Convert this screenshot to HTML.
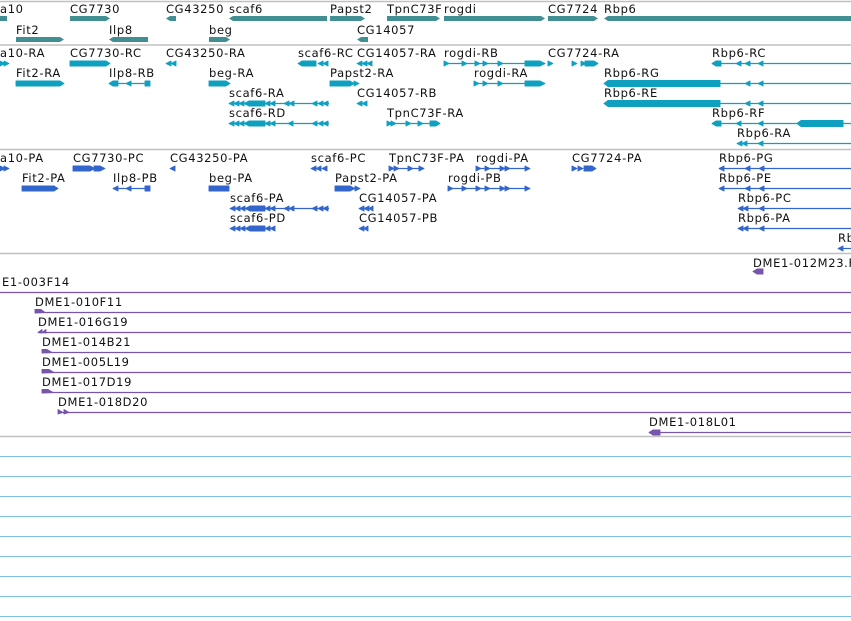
<!DOCTYPE html>
<html><head><meta charset="utf-8"><style>
html,body{margin:0;padding:0;background:#fff;width:851px;height:621px;overflow:hidden}
svg{display:block}
text{font-family:"DejaVu Sans","Liberation Sans",sans-serif;font-size:11.5px;fill:#111;letter-spacing:0.65px}
</style></head><body>
<svg width="851" height="621" viewBox="0 0 851 621" xmlns="http://www.w3.org/2000/svg">
<g stroke="#c0c0c0" stroke-width="1.5">
<line x1="0" y1="1.5" x2="851" y2="1.5"/><line x1="0" y1="45" x2="851" y2="45"/><line x1="0" y1="149.5" x2="851" y2="149.5"/><line x1="0" y1="253.5" x2="851" y2="253.5"/><line x1="0" y1="436.5" x2="851" y2="436.5"/>
</g>
<g stroke="#80bfe6" stroke-width="1">
<line x1="0" y1="456.5" x2="851" y2="456.5"/><line x1="0" y1="476.5" x2="851" y2="476.5"/><line x1="0" y1="496.5" x2="851" y2="496.5"/><line x1="0" y1="516.5" x2="851" y2="516.5"/><line x1="0" y1="536.5" x2="851" y2="536.5"/><line x1="0" y1="556.5" x2="851" y2="556.5"/><line x1="0" y1="576.5" x2="851" y2="576.5"/><line x1="0" y1="596.5" x2="851" y2="596.5"/><line x1="0" y1="616.5" x2="851" y2="616.5"/>
</g>

<!-- Track 1 genes -->
<g fill="#418e93">
<rect x="0" y="16" width="7" height="5"/>
<polygon points="70,16 106,16 110,18.5 106,21 70,21"/>
<polygon points="166,18.5 170,16 176,16 176,21 170,21"/>
<polygon points="229,18.5 233,16 327,16 327,21 233,21"/>
<polygon points="330,16 361,16 365,18.5 361,21 330,21"/>
<polygon points="387,16 436,16 440,18.5 436,21 387,21"/>
<polygon points="444,16 541,16 545,18.5 541,21 444,21"/>
<polygon points="548,16 594,16 598,18.5 594,21 548,21"/>
<polygon points="604,18.5 608,16 851,16 851,21 608,21"/>
<polygon points="16,37 60,37 64,39.5 60,42 16,42"/>
<polygon points="109,39.5 113,37 148,37 148,42 113,42"/>
<polygon points="209,37 226,37 230,39.5 226,42 209,42"/>
<polygon points="357,39.5 361,37 368,37 368,42 361,42"/>
</g>
<text x="0" y="13">a10</text><text x="70" y="13">CG7730</text><text x="166" y="13">CG43250</text><text x="229" y="13">scaf6</text><text x="330" y="13">Papst2</text><text x="387" y="13">TpnC73F</text><text x="444" y="13">rogdi</text><text x="548" y="13">CG7724</text><text x="604" y="13">Rbp6</text>
<text x="16" y="34">Fit2</text><text x="109" y="34">Ilp8</text><text x="209" y="34">beg</text><text x="357" y="34">CG14057</text>

<!-- Track 2 transcripts -->
<g stroke="#0fa0c0" stroke-width="1.2">
<line x1="109" y1="83.5" x2="150" y2="83.5"/>
<line x1="444" y1="63.5" x2="545" y2="63.5"/><line x1="474" y1="83.5" x2="545" y2="83.5"/>
<line x1="712" y1="63.5" x2="851" y2="63.5"/><line x1="720" y1="83.5" x2="851" y2="83.5"/><line x1="720" y1="103.5" x2="851" y2="103.5"/><line x1="712" y1="123.5" x2="851" y2="123.5"/><line x1="737" y1="143.5" x2="851" y2="143.5"/>
<line x1="229" y1="103.5" x2="329" y2="103.5"/><line x1="229" y1="123.5" x2="329" y2="123.5"/><line x1="387" y1="123.5" x2="440" y2="123.5"/>
</g>
<g fill="#0fa0c0" stroke="#0fa0c0" stroke-width="0.9" stroke-linejoin="round">
<polygon points="0,61 5,63.5 0,66"/><polygon points="4,61 9,63.5 4,66"/>
<polygon points="70,61 106,61 110,63.5 106,66 70,66"/>
<polygon points="166,63.5 171,61 171,66"/><polygon points="171,63.5 176,61 176,66"/>
<polygon points="298,63.5 302,61 316,61 316,66 302,66"/><polygon points="318,63.5 323,61 323,66"/><polygon points="323,63.5 328,61 328,66"/>
<polygon points="357,63.5 362,61 362,66"/><polygon points="362,63.5 367,61 367,66"/><polygon points="367,63.5 372,61 372,66"/>
<polygon points="444,61 449,63.5 444,66"/><polygon points="462,61 467,63.5 462,66"/><polygon points="475,61 480,63.5 475,66"/><polygon points="483,61 488,63.5 483,66"/><polygon points="498,61 503,63.5 498,66"/>
<polygon points="525,61 540,61 545,63.5 540,66 525,66"/>
<polygon points="548,61 553,63.5 548,66"/><polygon points="572,61 577,63.5 572,66"/><polygon points="581,61 586,63.5 581,66"/><polygon points="585,61 594,61 598,63.5 594,66 585,66"/>
<polygon points="712,63.5 716,61 721,61 721,66 716,66"/><polygon points="736,63.5 741,61 741,66"/><polygon points="745,63.5 750,61 750,66"/><polygon points="758,63.5 763,61 763,66"/>
<polygon points="16,81 60,81 64,83.5 60,86 16,86"/>
<polygon points="109,83.5 113,81 118,81 118,86 113,86"/><polygon points="126,83.5 131,81 131,86"/><polygon points="145,81 150,81 150,86 145,86"/>
<polygon points="209,81 226,81 230,83.5 226,86 209,86"/>
<polygon points="330,81 350,81 354,83.5 350,86 330,86"/><polygon points="354,81 359,83.5 354,86"/>
<polygon points="474,81 479,83.5 474,86"/><polygon points="483,81 488,83.5 483,86"/><polygon points="498,81 503,83.5 498,86"/><polygon points="525,81 540,81 545,83.5 540,86 525,86"/>
<polygon points="604,83.5 608,80.5 720,80.5 720,86.5 608,86.5"/><polygon points="745,83.5 750,81 750,86"/><polygon points="758,83.5 763,81 763,86"/>
<polygon points="229,103.5 234,101 234,106"/><polygon points="234,103.5 239,101 239,106"/><polygon points="239,103.5 244,101 244,106"/><polygon points="244,103.5 249,101 249,106"/><polygon points="249,101 265,101 265,106 249,106"/><polygon points="265,103.5 270,101 270,106"/><polygon points="270,103.5 275,101 275,106"/><polygon points="284,103.5 289,101 289,106"/><polygon points="289,103.5 294,101 294,106"/><polygon points="312,103.5 317,101 317,106"/><polygon points="318,103.5 323,101 323,106"/><polygon points="323,103.5 328,101 328,106"/>
<polygon points="357,103.5 362,101 362,106"/><polygon points="362,103.5 367,101 367,106"/>
<polygon points="604,103.5 608,100.5 720,100.5 720,106.5 608,106.5"/><polygon points="745,103.5 750,101 750,106"/><polygon points="758,103.5 763,101 763,106"/>
<polygon points="229,123.5 234,121 234,126"/><polygon points="234,123.5 239,121 239,126"/><polygon points="239,123.5 244,121 244,126"/><polygon points="244,123.5 249,121 249,126"/><polygon points="249,121 265,121 265,126 249,126"/><polygon points="265,123.5 270,121 270,126"/><polygon points="270,123.5 275,121 275,126"/><polygon points="288,123.5 293,121 293,126"/><polygon points="312,123.5 317,121 317,126"/><polygon points="318,123.5 323,121 323,126"/><polygon points="323,123.5 328,121 328,126"/>
<polygon points="387,121 392,123.5 387,126"/><polygon points="391,121 396,123.5 391,126"/><polygon points="406,121 411,123.5 406,126"/><polygon points="418,121 423,123.5 418,126"/><polygon points="430,121 436,121 440,123.5 436,126 430,126"/>
<polygon points="712,123.5 716,121 721,121 721,126 716,126"/><polygon points="736,123.5 741,121 741,126"/><polygon points="758,123.5 763,121 763,126"/><polygon points="797,123.5 801,120.5 843,120.5 843,126.5 801,126.5"/>
<polygon points="737,143.5 742,141 742,146"/><polygon points="742,143.5 747,141 747,146"/><polygon points="758,143.5 763,141 763,146"/>
</g>
<text x="0" y="57">a10-RA</text><text x="70" y="57">CG7730-RC</text><text x="166" y="57">CG43250-RA</text><text x="298" y="57">scaf6-RC</text><text x="357" y="57">CG14057-RA</text><text x="444" y="57">rogdi-RB</text><text x="548" y="57">CG7724-RA</text><text x="712" y="57">Rbp6-RC</text>
<text x="16" y="77">Fit2-RA</text><text x="109" y="77">Ilp8-RB</text><text x="209" y="77">beg-RA</text><text x="330" y="77">Papst2-RA</text><text x="474" y="77">rogdi-RA</text><text x="604" y="77">Rbp6-RG</text>
<text x="229" y="97">scaf6-RA</text><text x="357" y="97">CG14057-RB</text><text x="604" y="97">Rbp6-RE</text>
<text x="229" y="117">scaf6-RD</text><text x="387" y="117">TpnC73F-RA</text><text x="712" y="117">Rbp6-RF</text>
<text x="737" y="137">Rbp6-RA</text>

<!-- Track 3 proteins -->
<g stroke="#3366cc" stroke-width="1.2">
<line x1="113" y1="188.5" x2="150" y2="188.5"/><line x1="389" y1="168.5" x2="424" y2="168.5"/><line x1="476" y1="168.5" x2="530" y2="168.5"/><line x1="448" y1="188.5" x2="530" y2="188.5"/>
<line x1="230" y1="208.5" x2="329" y2="208.5"/>
<line x1="719" y1="168.5" x2="851" y2="168.5"/><line x1="719" y1="188.5" x2="851" y2="188.5"/><line x1="738" y1="208.5" x2="851" y2="208.5"/><line x1="738" y1="228.5" x2="851" y2="228.5"/><line x1="838" y1="248.5" x2="851" y2="248.5"/>
</g>
<g fill="#3366cc" stroke="#3366cc" stroke-width="0.9" stroke-linejoin="round">
<polygon points="0,166 5,168.5 0,171"/><polygon points="4,166 9,168.5 4,171"/>
<polygon points="73,166 90,166 95,168.5 90,171 73,171"/><polygon points="94,166 100,166 105,168.5 100,171 94,171"/>
<polygon points="170,168.5 175,166 175,171"/>
<polygon points="311,168.5 316,166 316,171"/><polygon points="316,168.5 321,166 321,171"/><polygon points="322,168.5 327,166 327,171"/>
<polygon points="389,166 394,168.5 389,171"/><polygon points="394,166 399,168.5 394,171"/><polygon points="408,166 413,168.5 408,171"/><polygon points="419,166 424,168.5 419,171"/>
<polygon points="476,166 481,168.5 476,171"/><polygon points="485,166 490,168.5 485,171"/><polygon points="500,166 505,168.5 500,171"/><polygon points="505,166 510,168.5 505,171"/><polygon points="525,166 530,168.5 525,171"/>
<polygon points="572,166 577,168.5 572,171"/><polygon points="578,166 583,168.5 578,171"/><polygon points="584,166 592,166 596,168.5 592,171 584,171"/>
<polygon points="719,168.5 724,166 724,171"/><polygon points="745,168.5 750,166 750,171"/><polygon points="759,168.5 764,166 764,171"/>
<polygon points="22,186 54,186 58,188.5 54,191 22,191"/>
<polygon points="113,188.5 118,186 118,191"/><polygon points="126,188.5 131,186 131,191"/><polygon points="145,186 150,186 150,191 145,191"/>
<polygon points="209,186 229,186 229,191 209,191"/>
<polygon points="335,186 350,186 350,191 335,191"/><polygon points="350,186 355,188.5 350,191"/><polygon points="355,186 360,188.5 355,191"/>
<polygon points="448,186 453,188.5 448,191"/><polygon points="462,186 467,188.5 462,191"/><polygon points="476,186 481,188.5 476,191"/><polygon points="485,186 490,188.5 485,191"/><polygon points="500,186 505,188.5 500,191"/><polygon points="505,186 510,188.5 505,191"/><polygon points="525,186 530,188.5 525,191"/>
<polygon points="719,188.5 724,186 724,191"/><polygon points="745,188.5 750,186 750,191"/><polygon points="759,188.5 764,186 764,191"/>
<polygon points="230,208.5 235,206 235,211"/><polygon points="235,208.5 240,206 240,211"/><polygon points="240,208.5 245,206 245,211"/><polygon points="245,208.5 250,206 250,211"/><polygon points="250,206 265,206 265,211 250,211"/><polygon points="265,208.5 270,206 270,211"/><polygon points="270,208.5 275,206 275,211"/><polygon points="284,208.5 289,206 289,211"/><polygon points="289,208.5 294,206 294,211"/><polygon points="312,208.5 317,206 317,211"/><polygon points="318,208.5 323,206 323,211"/><polygon points="323,208.5 328,206 328,211"/>
<polygon points="359,208.5 364,206 364,211"/><polygon points="364,208.5 369,206 369,211"/><polygon points="369,208.5 373,206 373,211"/>
<polygon points="738,208.5 743,206 743,211"/><polygon points="743,208.5 748,206 748,211"/><polygon points="759,208.5 764,206 764,211"/>
<polygon points="230,228.5 235,226 235,231"/><polygon points="235,228.5 240,226 240,231"/><polygon points="240,228.5 245,226 245,231"/><polygon points="245,228.5 250,226 250,231"/><polygon points="250,226 265,226 265,231 250,231"/><polygon points="265,228.5 270,226 270,231"/><polygon points="270,228.5 275,226 275,231"/>
<polygon points="359,228.5 364,226 364,231"/><polygon points="364,228.5 368,226 368,231"/>
<polygon points="738,228.5 743,226 743,231"/><polygon points="743,228.5 748,226 748,231"/><polygon points="759,228.5 764,226 764,231"/>
<polygon points="838,248.5 843,246 843,251"/>
</g>
<text x="0" y="162">a10-PA</text><text x="73" y="162">CG7730-PC</text><text x="170" y="162">CG43250-PA</text><text x="311" y="162">scaf6-PC</text><text x="389" y="162">TpnC73F-PA</text><text x="476" y="162">rogdi-PA</text><text x="572" y="162">CG7724-PA</text><text x="719" y="162">Rbp6-PG</text>
<text x="22" y="182">Fit2-PA</text><text x="113" y="182">Ilp8-PB</text><text x="209" y="182">beg-PA</text><text x="335" y="182">Papst2-PA</text><text x="448" y="182">rogdi-PB</text><text x="719" y="182">Rbp6-PE</text>
<text x="230" y="202">scaf6-PA</text><text x="359" y="202">CG14057-PA</text><text x="738" y="202">Rbp6-PC</text>
<text x="230" y="222">scaf6-PD</text><text x="359" y="222">CG14057-PB</text><text x="738" y="222">Rbp6-PA</text>
<text x="838" y="242">Rb</text>

<!-- Track 4 clones -->
<g stroke="#7755aa" stroke-width="1.2">
<line x1="0" y1="292.5" x2="851" y2="292.5"/><line x1="35" y1="312.5" x2="851" y2="312.5"/><line x1="38" y1="332.5" x2="851" y2="332.5"/><line x1="42" y1="352.5" x2="851" y2="352.5"/><line x1="42" y1="372.5" x2="851" y2="372.5"/><line x1="42" y1="392.5" x2="851" y2="392.5"/><line x1="58" y1="412.5" x2="851" y2="412.5"/><line x1="649" y1="432.5" x2="851" y2="432.5"/>
</g>
<g fill="#7755aa" stroke="#7755aa" stroke-width="0.9" stroke-linejoin="round">
<polygon points="753,271.5 757,269 763,269 763,274 757,274"/>
<polygon points="35,309.5 41,309.5 45,312.5 35,313"/>
<polygon points="38,332.5 42,329.5 42,333"/><polygon points="42,332.5 46,329.5 46,333"/>
<polygon points="42,349.5 47,349.5 52,352.5 42,353"/>
<polygon points="42,369.5 49,369.5 54,372.5 42,373"/>
<polygon points="42,389.5 48,389.5 53,392.5 42,393"/>
<polygon points="58,409.5 63,412.5 58,414"/><polygon points="64,409.5 69,412.5 64,414"/>
<polygon points="649,432.5 653,430 660,430 660,435 653,435"/>
</g>
<text x="753" y="267">DME1-012M23.F</text>
<text x="2" y="286">E1-003F14</text>
<text x="35" y="306">DME1-010F11</text>
<text x="38" y="326">DME1-016G19</text>
<text x="42" y="346">DME1-014B21</text>
<text x="42" y="366">DME1-005L19</text>
<text x="42" y="386">DME1-017D19</text>
<text x="58" y="406">DME1-018D20</text>
<text x="649" y="426">DME1-018L01</text>
</svg>
</body></html>
